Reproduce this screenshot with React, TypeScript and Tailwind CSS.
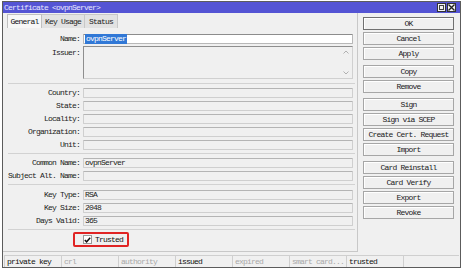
const txt = "font-['Liberation_Mono',monospace] text-[8px] tracking-[-0.8px] leading-none"

function Field({ label, value, white, selected }: { label: string; value?: string; white?: boolean; selected?: boolean }) {
  return (
    <div className="flex items-center h-[10px]">
      <div className="w-[77px] text-right text-[#222]">{label}:</div>
      <div
        className={`ml-[3px] w-[270px] h-[10px] flex items-center px-[1px] border rounded-[1px] ${
          white ? 'bg-white border-[#b8b8b8] border-t-[#8c8c8c]' : 'bg-[#f0f0f0] border-[#cfcfcf] border-t-[#b4b4b4]'
        }`}
      >
        {value && (
          <span className={selected ? 'bg-[#3178d6] text-white px-[1px] py-[1px]' : 'text-[#222]'}>{value}</span>
        )}
      </div>
    </div>
  )
}

function Sep() {
  return <div className="ml-[5px] w-[347px] h-px bg-[#d2d2d2]" />
}

function Btn({ label, main }: { label: string; main?: boolean }) {
  return (
    <div
      className={`w-[91px] h-[13px] flex items-center justify-center bg-[#f0f0f0] border text-[#1a1a1a] shadow-[inset_1px_1px_0_#ffffff] ${
        main ? 'border-[#707070]' : 'border-[#a6a6a6]'
      }`}
    >
      {label}
    </div>
  )
}

function Cell({ label, on, last }: { label: string; on?: boolean; last?: boolean }) {
  return (
    <div
      className={`${last ? 'flex-1' : 'w-[57px]'} h-[11px] flex items-center pl-[2px] border-l border-[#cfcfcf] ${
        on ? 'text-[#111]' : 'text-[#a8a8a8]'
      }`}
    >
      {label}
    </div>
  )
}

export default function App() {
  return (
    <div className={`w-[465px] h-[278px] bg-white pt-[1px] pl-[2px] ${txt}`}>
      <div className="w-[459px] h-[267px] border border-[#5c5c5c] bg-[#f0f0f0] flex flex-col">
        {/* title bar */}
        <div className="h-[11px] bg-[#5454d4] flex items-center pl-[1px] pr-[4px]">
          <span className="text-[#e8e8ff]">Certificate &lt;ovpnServer&gt;</span>
          <div className="ml-auto flex gap-[1px]">
            <div className="w-[9px] h-[9px] bg-[#f4f4f4] border border-[#333] flex items-center justify-center">
              <div className="w-[5px] h-[5px] border border-[#444]" />
            </div>
            <div className="w-[9px] h-[9px] bg-[#f4f4f4] border border-[#333] flex items-center justify-center">
              <svg width="7" height="7" viewBox="0 0 7 7">
                <path d="M0.5 0.5 L6.5 6.5 M6.5 0.5 L0.5 6.5" stroke="#222" strokeWidth="1.4" />
              </svg>
            </div>
          </div>
        </div>

        <div className="flex h-[240px]">
          {/* left panel */}
          <div className="w-[355px] h-[239px] border-r border-b border-[#c8c8c8] flex flex-col">
            <div className="mt-[1px] ml-[4px] flex h-[14px]">
              <div className="w-[35px] flex items-center justify-center bg-[#f7f7f7] border border-b-0 border-[#c0c0c0] text-[#111]">General</div>
              <div className="w-[43px] flex items-center justify-center bg-[#e2e2e2] border-t border-r border-[#c8c8c8] text-[#222]">Key Usage</div>
              <div className="w-[33px] flex items-center justify-center bg-[#e2e2e2] border-t border-r border-[#c8c8c8] text-[#222]">Status</div>
            </div>

            <div className="mt-[6px] flex flex-col">
              <Field label="Name" value="ovpnServer" white selected />
              <div className="mt-[2px] flex">
                <div className="w-[77px] text-right text-[#222] pt-[3px]">Issuer:</div>
                <div className="ml-[3px] w-[270px] h-[33px] bg-[#f0f0f0] border border-[#d0d0d0] border-t-[#8e8e8e] border-l-[#8e8e8e] flex justify-end pr-[3px]">
                  <div className="flex flex-col justify-between py-[3px]">
                    <svg width="6" height="4" viewBox="0 0 6 4"><path d="M0.5 3.5 L3 1 L5.5 3.5" fill="none" stroke="#b0b0b0" /></svg>
                    <svg width="6" height="4" viewBox="0 0 6 4"><path d="M0.5 0.5 L3 3 L5.5 0.5" fill="none" stroke="#b0b0b0" /></svg>
                  </div>
                </div>
              </div>

              <div className="mt-[4px]"><Sep /></div>
              <div className="mt-[4px] flex flex-col gap-[3px]">
                <Field label="Country" />
                <Field label="State" />
                <Field label="Locality" />
                <Field label="Organization" />
                <Field label="Unit" />
              </div>

              <div className="mt-[3px]"><Sep /></div>
              <div className="mt-[4px] flex flex-col gap-[3px]">
                <Field label="Common Name" value="ovpnServer" />
                <Field label="Subject Alt. Name" />
              </div>

              <div className="mt-[3px]"><Sep /></div>
              <div className="mt-[5px] flex flex-col gap-[3px]">
                <Field label="Key Type" value="RSA" />
                <Field label="Key Size" value="2048" />
                <Field label="Days Valid" value="365" />
              </div>

              <div className="mt-[3px]"><Sep /></div>
              <div className="mt-[2px] ml-[70px] w-[56px] h-[15px] border-2 border-[#e02424] rounded-[2px] flex items-center pl-[8px] gap-[3px] text-[#111]">
                <div className="w-[9px] h-[9px] bg-white border border-[#9a9a9a] flex items-center justify-center">
                  <svg width="7" height="6" viewBox="0 0 7 6"><path d="M0.8 3 L2.6 4.8 L6.2 0.8" fill="none" stroke="#111" strokeWidth="1.5" /></svg>
                </div>
                <span>Trusted</span>
              </div>
            </div>
          </div>

          {/* right buttons */}
          <div className="ml-[5px] mt-[4px] flex flex-col gap-[5px]">
            <div className="flex flex-col gap-[2px]">
              <Btn label="OK" main />
              <Btn label="Cancel" />
              <Btn label="Apply" />
            </div>
            <div className="flex flex-col gap-[2px]">
              <Btn label="Copy" />
              <Btn label="Remove" />
            </div>
            <div className="flex flex-col gap-[2px]">
              <Btn label="Sign" />
              <Btn label="Sign via SCEP" />
              <Btn label="Create Cert. Request" />
              <Btn label="Import" />
            </div>
            <div className="flex flex-col gap-[2px]">
              <Btn label="Card Reinstall" />
              <Btn label="Card Verify" />
              <Btn label="Export" />
              <Btn label="Revoke" />
            </div>
          </div>
        </div>

        {/* status bar */}
        <div className="mt-[2px] mx-[1px] h-[11px] flex border-t border-[#cfcfcf]">
          <Cell label="private key" on />
          <Cell label="crl" />
          <Cell label="authority" />
          <Cell label="issued" on />
          <Cell label="expired" />
          <Cell label="smart card..." />
          <Cell label="trusted" on />
          <Cell label="" last />
        </div>
      </div>
    </div>
  )
}
